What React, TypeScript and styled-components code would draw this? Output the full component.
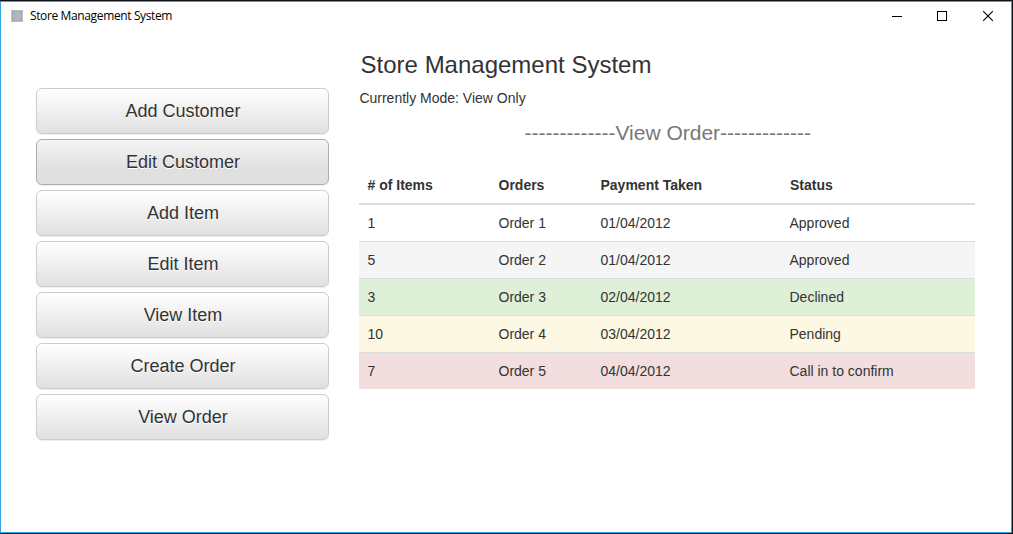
import React from "react";
import styled, { createGlobalStyle, css } from "styled-components";

const GlobalStyle = createGlobalStyle`
  *, *::before, *::after { box-sizing: border-box; }
  html, body { margin: 0; height: 100%; background: #10141c; }
  body {
    overflow: hidden;
    font-family: "Liberation Sans", Arial, sans-serif;
    font-size: 14px;
    line-height: 20px;
    color: #333;
  }
`;

const Desktop = styled.div`
  display: flex;
  height: 534px;
  width: 1013px;
  padding: 1px 1px 1px 0;
  background: #10141c;
`;

const Window = styled.div`
  flex: 1;
  display: flex;
  flex-direction: column;
  border: 1px solid #35a2e4;
  background: #fff;
`;

const TitleBar = styled.header`
  display: flex;
  align-items: center;
  height: 28px;
  padding-left: 10px;
`;

const AppIcon = styled.span`
  width: 12px;
  height: 12px;
  margin-right: 7px;
  border: 1px solid #b9bdc5;
  background: radial-gradient(#b4b9c1, #a5abb5);
`;

const Caption = styled.span`
  flex: 1;
  font-family: "Open Sans", "Noto Sans", sans-serif;
  font-size: 12px;
  letter-spacing: -0.37px;
  color: #000;
`;

const Control = styled.span<{ $width?: number }>`
  display: flex;
  align-items: center;
  justify-content: center;
  width: ${(p) => p.$width ?? 46}px;
  height: 28px;
`;

const Body = styled.main`
  display: flex;
  align-items: flex-start;
  gap: 30px;
  padding: 0 36px 0 35px;
`;

const Sidebar = styled.nav`
  display: flex;
  flex-direction: column;
  gap: 5px;
  width: 293px;
  padding-top: 58px;
`;

const MenuButton = styled.button<{ $active?: boolean }>`
  height: 46px;
  padding: 0 0 0 1px;
  border: 1px solid #ccc;
  border-radius: 6px;
  font: 18px/24px "Liberation Sans", Arial, sans-serif;
  color: #333;
  text-shadow: 0 1px 0 #fff;
  background: linear-gradient(to bottom, #fff 0%, #e0e0e0 100%);
  box-shadow: inset 0 1px 0 rgba(255, 255, 255, 0.15), 0 1px 1px rgba(0, 0, 0, 0.075);
  ${(p) =>
    p.$active &&
    css`
      border-color: #adadad;
      background: linear-gradient(to bottom, #f5f5f5 0, #e0e0e0 66%);
    `}
`;

const Content = styled.section`
  width: 616px;
`;

const Heading = styled.h1`
  margin: 22px 0 0 1.6px;
  font-size: 24px;
  font-weight: 400;
  line-height: 26px;
`;

const Mode = styled.p`
  margin: 10px 0 0 0.4px;
`;

const Subtitle = styled.h2`
  margin: 10px 0 17px 1.5px;
  font-size: 21px;
  font-weight: 400;
  line-height: 30px;
  color: #777;
  text-align: center;
`;

const Table = styled.table`
  width: 616px;
  table-layout: fixed;
  border-collapse: separate;
  border-spacing: 0;
`;

const HeadCell = styled.th`
  height: 40px;
  padding: 2px 8px 0 8.5px;
  border-bottom: 2px solid #ddd;
  text-align: left;

  &:last-child { padding-left: 9px; }
`;

type Tone = "plain" | "striped" | "success" | "warning" | "danger";

const tones: Record<Tone, string> = {
  plain: "#fff",
  striped: "#f5f5f5",
  success: "#dff0d8",
  warning: "#fcf8e3",
  danger: "#f2dede",
};

const Row = styled.tr<{ $tone: Tone }>`
  background: ${(p) => tones[p.$tone]};
  &:first-child td { border-top: 0; height: 36px; }
`;

const Cell = styled.td`
  height: 37px;
  padding: 0 8px 0 8.5px;
  border-top: 1px solid #ddd;
`;

const menu = ["Add Customer", "Edit Customer", "Add Item", "Edit Item", "View Item", "Create Order", "View Order"];

const orders: { tone: Tone; cells: string[] }[] = [
  { tone: "plain", cells: ["1", "Order 1", "01/04/2012", "Approved"] },
  { tone: "striped", cells: ["5", "Order 2", "01/04/2012", "Approved"] },
  { tone: "success", cells: ["3", "Order 3", "02/04/2012", "Declined"] },
  { tone: "warning", cells: ["10", "Order 4", "03/04/2012", "Pending"] },
  { tone: "danger", cells: ["7", "Order 5", "04/04/2012", "Call in to confirm"] },
];

export default function App() {
  return (
    <>
      <GlobalStyle />
      <Desktop>
        <Window>
          <TitleBar>
            <AppIcon />
            <Caption>Store Management System</Caption>
            <Control $width={44}>
              <svg width="10" height="10" shapeRendering="crispEdges">
                <path d="M0 5.5H10" stroke="#000" />
              </svg>
            </Control>
            <Control>
              <svg width="10" height="10" shapeRendering="crispEdges">
                <path d="M.5 .5H9.5V9.5H.5Z" stroke="#000" fill="none" />
              </svg>
            </Control>
            <Control>
              <svg width="10" height="10">
                <path d="M0 0L10 10M10 0L0 10" stroke="#000" strokeWidth="1.1" />
              </svg>
            </Control>
          </TitleBar>
          <Body>
            <Sidebar>
              {menu.map((label) => (
                <MenuButton key={label} $active={label === "Edit Customer"}>
                  {label}
                </MenuButton>
              ))}
            </Sidebar>
            <Content>
              <Heading>Store Management System</Heading>
              <Mode>Currently Mode: View Only</Mode>
              <Subtitle>-------------View Order-------------</Subtitle>
              <Table>
                <colgroup>
                  <col width="131" />
                  <col width="102" />
                  <col width="189" />
                  <col width="194" />
                </colgroup>
                <thead>
                  <tr>
                    <HeadCell># of Items</HeadCell>
                    <HeadCell>Orders</HeadCell>
                    <HeadCell>Payment Taken</HeadCell>
                    <HeadCell>Status</HeadCell>
                  </tr>
                </thead>
                <tbody>
                  {orders.map((order) => (
                    <Row key={order.cells[1]} $tone={order.tone}>
                      {order.cells.map((text, i) => (
                        <Cell key={i}>{text}</Cell>
                      ))}
                    </Row>
                  ))}
                </tbody>
              </Table>
            </Content>
          </Body>
        </Window>
      </Desktop>
    </>
  );
}
